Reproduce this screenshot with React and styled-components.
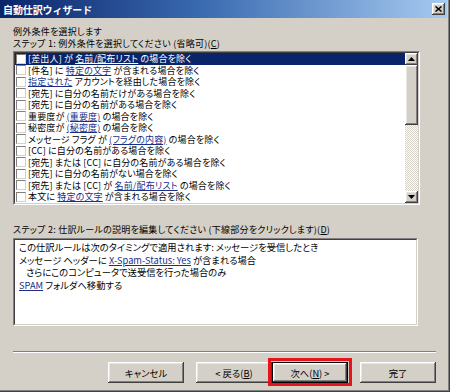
import React from "react";
import styled, { createGlobalStyle, css } from "styled-components";

const GlobalStyle = createGlobalStyle`
  html, body { margin: 0; padding: 0; background: #d4d0c8; }
  body { font-family: "Noto Sans CJK JP", "Noto Sans", sans-serif; }
  * { box-sizing: border-box; }
`;

const raised = css`
  background: #d4d0c8;
  box-shadow: inset -1px -1px #404040, inset 1px 1px #ffffff,
    inset -2px -2px #808080, inset 2px 2px #e8e6e2;
`;

const Frame = styled.div`
  width: 450px;
  height: 392px;
  border-right: 1px solid #404040;
  border-bottom: 1px solid #404040;
`;

const FrameInner = styled.div`
  height: 100%;
  display: flex;
  flex-direction: column;
  border-right: 1px solid #808080;
  border-bottom: 1px solid #808080;
  padding: 0 1px 1px 0;
  background: #d4d0c8;
`;

const TitleBar = styled.div`
  height: 18px;
  flex: none;
  display: flex;
  align-items: center;
  justify-content: space-between;
  padding: 0 2px 0 3px;
  background: linear-gradient(90deg, #0a246a 0%, #3a6ab0 45%, #a6caf0 100%);
  color: #fff;
  font-weight: bold;
  font-size: 10px;
  letter-spacing: -0.1px;
`;

const CloseBtn = styled.div`
  ${raised};
  width: 13px;
  height: 12px;
  display: grid;
  place-items: center;
`;

const Body = styled.div`
  flex: 1;
  display: flex;
  flex-direction: column;
  padding: 8px 11px 0 13px;
  font-size: 9.3px;
  color: #000;
  font-feature-settings: "palt";
`;

const Label = styled.div`
  height: 12px;
  line-height: 12px;
  font-size: 9px;
  letter-spacing: 0.25px;
  white-space: nowrap;
  margin-top: ${(p) => p.$mt || 0}px;
`;

const SunkenOuter = styled.div`
  width: ${(p) => p.$w}px;
  height: ${(p) => p.$h}px;
  margin-top: ${(p) => p.$mt || 0}px;
  border: 1px solid;
  border-color: #808080 #ffffff #ffffff #808080;
  flex: none;
`;

const SunkenInner = styled.div`
  height: 100%;
  border: 1px solid;
  border-color: #404040 #d4d0c8 #d4d0c8 #404040;
  background: #fff;
  display: flex;
  overflow: hidden;
`;

const Items = styled.div`
  flex: 1;
  display: flex;
  flex-direction: column;
  min-width: 0;
`;

const Row = styled.div`
  height: 11.5px;
  flex: none;
  display: flex;
  align-items: center;
  gap: 2px;
  padding-left: 1px;
  white-space: nowrap;
  font-size: 9px;
  letter-spacing: 0.15px;
  line-height: 11px;
  background: ${(p) => (p.$selected ? "#0a246a" : "transparent")};
  color: ${(p) => (p.$selected ? "#fff" : "#000")};
`;

const Check = styled.span`
  width: 10px;
  height: 10px;
  flex: none;
  background: #fff;
  border: 1px solid;
  border-color: #808080 #d4d0c8 #d4d0c8 #808080;
`;

const Link = styled.span`
  color: ${(p) => (p.$onDark ? "#fff" : "#1b2f8a")};
  text-decoration: underline;
  text-underline-offset: 1px;
`;

const U = styled.span`
  text-decoration: underline;
`;

const Scrollbar = styled.div`
  width: 13px;
  flex: none;
  display: flex;
  flex-direction: column;
  background: repeating-conic-gradient(#ffffff 0 25%, #d4d0c8 0 50%) 0 0 / 2px 2px;
`;

const ArrowBtn = styled.div`
  ${raised};
  height: 12px;
  flex: none;
  display: grid;
  place-items: center;
`;

const Thumb = styled.div`
  ${raised};
  height: 60px;
  flex: none;
`;

const Track = styled.div`
  flex: 1;
`;

const Desc = styled.div`
  padding: 1px 4px;
  line-height: 12.5px;
  white-space: nowrap;
  display: flex;
  flex-direction: column;
`;

const DescLine = styled.div`
  padding-left: ${(p) => (p.$indent ? 7 : 0)}px;
`;

const Separator = styled.div`
  margin-top: 25px;
  border-top: 1px solid #808080;
  border-bottom: 1px solid #ffffff;
  flex: none;
`;

const ButtonRow = styled.div`
  margin-top: 9px;
  display: flex;
  justify-content: flex-end;
  gap: 12px;
`;

const Pair = styled.div`
  display: flex;
`;

const Button = styled.button`
  ${raised};
  width: 76px;
  height: 21px;
  padding: 0;
  border: ${(p) => (p.$default ? "1px solid #000" : "none")};
  font-family: inherit;
  font-size: 9.3px;
  font-feature-settings: "palt";
  color: #000;
  white-space: nowrap;
`;

const Marked = styled.div`
  position: relative;
  display: flex;
  &::after {
    content: "";
    position: absolute;
    top: -4px;
    left: -4px;
    right: -4px;
    bottom: -3px;
    border: 3px solid #e3141b;
    pointer-events: none;
  }
`;

const rows = [
  <>[差出人] が <Link $onDark>名前/配布リスト</Link> の場合を除く</>,
  <>[件名] に <Link>特定の文字</Link> が含まれる場合を除く</>,
  <><Link>指定された</Link> アカウントを経由した場合を除く</>,
  <>[宛先] に自分の名前だけがある場合を除く</>,
  <>[宛先] に自分の名前がある場合を除く</>,
  <>重要度が <Link>(重要度)</Link> の場合を除く</>,
  <>秘密度が <Link>(秘密度)</Link> の場合を除く</>,
  <>メッセージ フラグ が <Link>(フラグの内容)</Link> の場合を除く</>,
  <>[CC] に自分の名前がある場合を除く</>,
  <>[宛先] または [CC] に自分の名前がある場合を除く</>,
  <>[宛先] に自分の名前がない場合を除く</>,
  <>[宛先] または [CC] が <Link>名前/配布リスト</Link> の場合を除く</>,
  <>本文に <Link>特定の文字</Link> が含まれる場合を除く</>,
];

export default function App() {
  return (
    <>
      <GlobalStyle />
      <Frame>
        <FrameInner>
          <TitleBar>
            <span>自動仕訳ウィザード</span>
            <CloseBtn>
              <svg width="7" height="6" viewBox="0 0 7 6">
                <path d="M0.5 0.5 L6.5 5.5 M6.5 0.5 L0.5 5.5" stroke="#000" strokeWidth="1.5" />
              </svg>
            </CloseBtn>
          </TitleBar>
          <Body>
            <Label>例外条件を選択します</Label>
            <Label>
              ステップ 1: 例外条件を選択してください (省略可)(<U>C</U>)
            </Label>
            <SunkenOuter $w={407} $h={154} $mt={1}>
              <SunkenInner>
                <Items>
                  {rows.map((r, i) => (
                    <Row key={i} $selected={i === 0}>
                      <Check />
                      <span>{r}</span>
                    </Row>
                  ))}
                </Items>
                <Scrollbar>
                  <ArrowBtn>
                    <svg width="7" height="4" viewBox="0 0 7 4">
                      <path d="M3.5 0 L7 4 L0 4 Z" fill="#000" />
                    </svg>
                  </ArrowBtn>
                  <Thumb />
                  <Track />
                  <ArrowBtn>
                    <svg width="7" height="4" viewBox="0 0 7 4">
                      <path d="M0 0 L7 0 L3.5 4 Z" fill="#000" />
                    </svg>
                  </ArrowBtn>
                </Scrollbar>
              </SunkenInner>
            </SunkenOuter>
            <Label $mt={19}>
              ステップ 2: 仕訳ルールの説明を編集してください (下線部分をクリックします)(<U>D</U>)
            </Label>
            <SunkenOuter $w={405} $h={88} $mt={2}>
              <SunkenInner>
                <Desc>
                  <DescLine>この仕訳ルールは次のタイミングで適用されます: メッセージを受信したとき</DescLine>
                  <DescLine>
                    メッセージ ヘッダーに <Link>X-Spam-Status: Yes</Link> が含まれる場合
                  </DescLine>
                  <DescLine $indent>さらにこのコンピュータで送受信を行った場合のみ</DescLine>
                  <DescLine>
                    <Link>SPAM</Link> フォルダへ移動する
                  </DescLine>
                </Desc>
              </SunkenInner>
            </SunkenOuter>
            <Separator />
            <ButtonRow>
              <Button>キャンセル</Button>
              <Pair>
                <Button>&lt; 戻る(<U>B</U>)</Button>
                <Marked>
                  <Button $default>次へ(<U>N</U>) &gt;</Button>
                </Marked>
              </Pair>
              <Button>完了</Button>
            </ButtonRow>
          </Body>
        </FrameInner>
      </Frame>
    </>
  );
}
